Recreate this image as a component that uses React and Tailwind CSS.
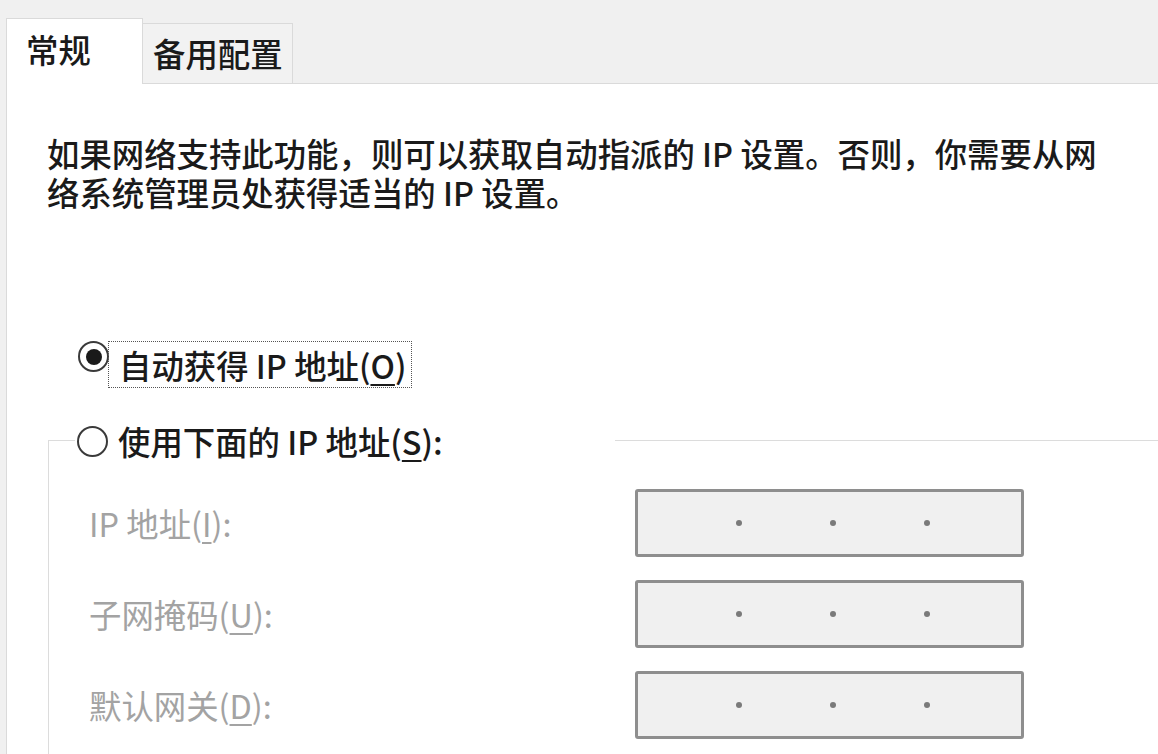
import React from 'react'

const font = { fontFamily: '"Noto Sans CJK SC", "Microsoft YaHei", sans-serif' }

const Key = ({ children }) => <span className="underline underline-offset-[5px] decoration-[2px]">{children}</span>

const Radio = ({ checked }) => (
  <div className="w-[31px] h-[31px] shrink-0 rounded-full border-[2.5px] border-[#3a3a3a] bg-white flex items-center justify-center">
    {checked && <div className="w-[16px] h-[16px] rounded-full bg-[#1a1a1a]" />}
  </div>
)

const IpBox = () => (
  <div className="w-[389px] h-[68px] rounded-[3px] border-[3px] border-[#8e8e8e] bg-[#f0f0f0] flex items-center pl-[98px] gap-[88px]">
    <div className="w-[6px] h-[6px] rounded-full bg-[#7a7a7a]" />
    <div className="w-[6px] h-[6px] rounded-full bg-[#7a7a7a]" />
    <div className="w-[6px] h-[6px] rounded-full bg-[#7a7a7a]" />
  </div>
)

const fields = [
  { label: 'IP 地址(', key: 'I', end: '):' },
  { label: '子网掩码(', key: 'U', end: '):' },
  { label: '默认网关(', key: 'D', end: '):' },
]

export default function App() {
  return (
    <div style={font} className="w-[1158px] h-[754px] overflow-hidden bg-[#f0f0f0] pl-[6px] pt-[18px] flex flex-col text-[32.4px] font-medium text-[#1a1a1a]">
      {/* Tabs */}
      <div className="flex items-end h-[66px]">
        <div className="relative z-10 w-[137px] h-[66px] mb-[-1px] bg-white border-l border-t border-r border-[#dadada] pl-[19px] pt-[12px] leading-[36px]">
          常规
        </div>
        <div className="w-[150px] h-[60px] bg-[#f2f2f2] border-t border-r border-[#dadada] pl-[10px] pt-[11px] leading-[36px]">
          备用配置
        </div>
      </div>

      {/* Content */}
      <div className="flex-1 bg-white border-l border-t border-[#dadada] pl-[40px] pt-[49px]">
        <p className="leading-[39px]">
          如果网络支持此功能，则可以获取自动指派的 IP 设置。否则，你需要从网
          <br />
          络系统管理员处获得适当的 IP 设置。
        </p>

        {/* Radio 1 */}
        <div className="mt-[130px] ml-[31px] flex items-start">
          <Radio checked />
          <div className="-ml-px h-[47px] border border-dotted border-[#555555] pl-[10px] pr-[5px] pt-[4px] leading-[37px]">
            自动获得 IP 地址(<Key>O</Key>)
          </div>
        </div>

        {/* Group box */}
        <div className="mt-[33px] ml-px flex flex-col">
          <div className="flex items-center h-[40px]">
            <div className="w-[27px] h-[21px] self-end border-l border-t border-[#dcdcdc]" />
            <div className="w-[540px] flex items-center pl-[2px]">
              <Radio />
              <span className="ml-[10px] leading-[36px]">
                使用下面的 IP 地址(<Key>S</Key>):
              </span>
            </div>
            <div className="flex-1 h-[21px] self-end border-t border-[#dcdcdc]" />
          </div>
          <div className="border-l border-[#dcdcdc] pt-[28px] pb-[40px] flex flex-col gap-[23px]">
            {fields.map(f => (
              <div key={f.key} className="flex items-center">
                <div className="w-[586px] pl-[40px] text-[#a3a3a3] font-normal leading-[36px]">
                  {f.label}<Key>{f.key}</Key>{f.end}
                </div>
                <IpBox />
              </div>
            ))}
          </div>
        </div>
      </div>
    </div>
  )
}
